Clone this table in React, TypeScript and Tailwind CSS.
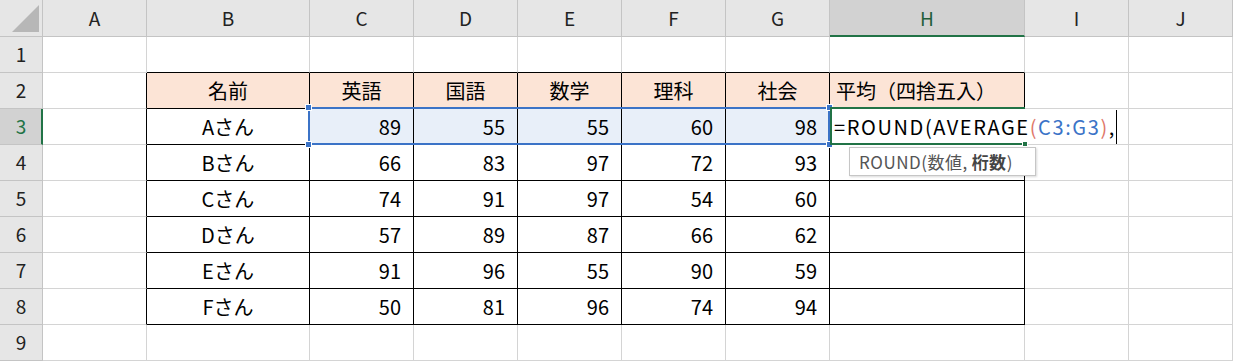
import React from 'react';

const COLS = ['A', 'B', 'C', 'D', 'E', 'F', 'G', 'H', 'I', 'J'];
const SUBJECTS = ['英語', '国語', '数学', '理科', '社会'];
const ROWS: [string, number[]][] = [
  ['Aさん', [89, 55, 55, 60, 98]],
  ['Bさん', [66, 83, 97, 72, 93]],
  ['Cさん', [74, 91, 97, 54, 60]],
  ['Dさん', [57, 89, 87, 66, 62]],
  ['Eさん', [91, 96, 55, 90, 59]],
  ['Fさん', [50, 81, 96, 74, 94]],
];

const Handle = ({ className }: { className: string }) => (
  <span className={`absolute h-[7px] w-[7px] border border-white bg-[#3b73c7] ${className}`} />
);

const cellContent = (r: number, c: number) => {
  if (r === 2) {
    if (c === 1) return <span className="w-full text-center">名前</span>;
    if (c >= 2 && c <= 6) return <span className="w-full text-center">{SUBJECTS[c - 2]}</span>;
    if (c === 7) return <span className="w-full pl-[6px]">平均（四捨五入）</span>;
  }
  if (r >= 3 && r <= 8) {
    const [name, scores] = ROWS[r - 3];
    if (c === 1) return <span className="w-full text-center">{name}</span>;
    if (c >= 2 && c <= 6) return <span className="w-full pr-3 text-right">{scores[c - 2]}</span>;
  }
  return null;
};

const App = () => {
  const cells: React.ReactNode[] = [];

  // header row
  cells.push(
    <div key="corner" className="relative h-[37px] border-b border-r border-[#c4c4c4] bg-[#e6e6e6]">
      <svg className="absolute left-0 top-0" width="42" height="36">
        <polygon points="12,32 39,32 39,5" fill="#b7b7b7" />
      </svg>
    </div>
  );
  COLS.forEach((col, c) => {
    cells.push(
      <div
        key={`h${col}`}
        className={
          c === 7
            ? 'flex h-[37px] items-center justify-center border-r border-b-2 border-r-[#c4c4c4] border-b-[#217346] bg-[#d2d2d2] pt-[1px] text-[19px] text-[#1f5f3a]'
            : 'flex h-[37px] items-center justify-center border-r border-b border-[#c4c4c4] bg-[#e6e6e6] text-[19px] text-[#222]'
        }
      >
        {col}
      </div>
    );
  });

  for (let r = 1; r <= 9; r++) {
    cells.push(
      <div
        key={`r${r}`}
        className={
          r === 3
            ? 'flex h-[36px] items-center justify-center border-b border-r-2 border-b-[#c4c4c4] border-r-[#217346] bg-[#d2d2d2] pl-[1px] text-[19px] text-[#217346]'
            : 'flex h-[36px] items-center justify-center border-b border-r border-[#c4c4c4] bg-[#e6e6e6] text-[19px] text-[#222]'
        }
      >
        {r}
      </div>
    );
    for (let c = 0; c < 10; c++) {
      if (r === 3 && c === 8) continue;
      if (r === 3 && c === 7) {
        // H3 in edit mode, text runs on into I3
        cells.push(
          <div
            key={`c${r}-${c}`}
            className="col-span-2 flex h-[36px] items-center overflow-visible whitespace-nowrap border-b border-r border-[#d4d4d4] bg-white pl-[4px] text-[20px] tracking-[1.6px] text-black"
          >
            <span>=ROUND(AVERAGE</span>
            <span className="text-[#e0776a]">(</span>
            <span className="text-[#3b73c7]">C3:G3</span>
            <span className="text-[#e0776a]">)</span>
            <span>,</span>
            <span className="h-[34px] w-px bg-black" />
          </div>
        );
        continue;
      }
      const inTable = r >= 2 && r <= 8 && c >= 1 && c <= 7;
      const rightBlack = inTable || (c === 0 && r >= 2 && r <= 8);
      const bottomBlack = inTable || (r === 1 && c >= 1 && c <= 7);
      const rc = rightBlack ? 'border-r-black' : 'border-r-[#d4d4d4]';
      const bc = bottomBlack ? 'border-b-black' : 'border-b-[#d4d4d4]';
      const bg =
        r === 2 && inTable ? 'bg-[#fce4d6]' : r === 3 && c >= 2 && c <= 6 ? 'bg-[#e8eff9]' : 'bg-white';
      cells.push(
        <div
          key={`c${r}-${c}`}
          className={`flex h-[36px] items-center border-b border-r ${rc} ${bc} ${bg} whitespace-nowrap text-[20px] text-black`}
        >
          {cellContent(r, c)}
        </div>
      );
    }
  }

  return (
    <div className="relative h-[361px] w-[1233px] overflow-hidden bg-white font-['Noto_Sans_CJK_JP','Noto_Sans',sans-serif]">
      <div className="grid grid-cols-[43px_104px_163px_104px_104px_104px_104px_104px_195px_104px_104px]">
        {cells}
      </div>

      {/* selection C3:G3 */}
      <div className="pointer-events-none absolute left-[308px] top-[107px] h-[38px] w-[522px] border-2 border-[#3b73c7]">
        <Handle className="-left-[5px] -top-[5px]" />
        <Handle className="-bottom-[5px] -left-[5px]" />
        <Handle className="-right-[5px] -top-[5px]" />
        <Handle className="-bottom-[5px] -right-[5px]" />
      </div>

      {/* active cell H3 */}
      <div className="pointer-events-none absolute left-[830px] top-[107px] h-[38px] w-[195px] border-b-2 border-l-2 border-t-2 border-[#217346]">
        <span className="absolute -bottom-[4px] -right-[3px] h-[6px] w-[6px] border border-white bg-[#217346]" />
      </div>

      {/* function tooltip */}
      <div className="absolute left-[849px] top-[147px] flex h-[29px] w-[187px] items-center whitespace-nowrap border border-[#c6c6c6] bg-white pl-[9px] text-[17px] tracking-[0.5px] text-[#555] shadow-[1px_1px_2px_rgba(0,0,0,0.15)]">
        <span>ROUND(数値, </span>
        <span className="ml-[4px] font-bold text-[#444]">桁数</span>
        <span>)</span>
      </div>
    </div>
  );
};

export default App;
